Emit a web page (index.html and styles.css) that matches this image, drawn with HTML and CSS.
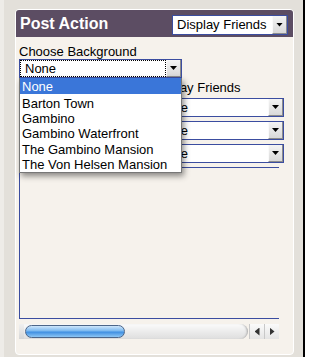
FILE: index.html
```html
<!DOCTYPE html>
<html>
<head>
<meta charset="utf-8">
<link rel="stylesheet" href="styles.css">
</head>
<body>
<div class="page">
  <div class="strip"></div>
  <div class="gutter">
    <div class="panel">
      <div class="header">
        <div class="title">Post Action</div>
        <div class="select hdr-select"><span class="txt">Display Friends</span><span class="btn"><i class="tri"></i></span></div>
      </div>
      <div class="content">
        <div class="label">Choose Background</div>
        <div class="select bg-select"><span class="txt focus">None</span><span class="btn"><i class="tri"></i></span></div>
        <div class="friends">
          <div class="label">Display Friends</div>
          <div class="select f-select"><span class="txt">None</span><span class="btn"><i class="tri"></i></span></div>
          <div class="select f-select"><span class="txt">None</span><span class="btn"><i class="tri"></i></span></div>
          <div class="select f-select"><span class="txt">None</span><span class="btn"><i class="tri"></i></span></div>
        </div>
        <div class="box"></div>
        <div class="hscroll">
          <div class="track"><div class="cap"></div><div class="thumb"></div></div>
          <div class="arrow"><i class="ltri"></i></div>
          <div class="arrow"><i class="rtri"></i></div>
        </div>
        <ul class="dropdown">
          <li class="item sel">None</li>
          <li class="item first">Barton Town</li>
          <li class="item">Gambino</li>
          <li class="item">Gambino Waterfront</li>
          <li class="item">The Gambino Mansion</li>
          <li class="item">The Von Helsen Mansion</li>
        </ul>
      </div>
    </div>
  </div>
  <div class="rule"></div>
  <div class="blank"></div>
</div>
</body>
</html>
```
FILE: styles.css
```css
* { box-sizing: border-box; }
html, body { margin: 0; padding: 0; }
body {
  font-family: "Liberation Sans", Arial, Helvetica, sans-serif;
  font-size: 13px;
  color: #000;
  background: #fff;
}
.page {
  display: flex;
  height: 357px;
  width: 321px;
  background: #e3e0da;
}
.strip { width: 4px; background: #eeece8; }
.gutter { padding: 9px 9px 0 11px; }
.panel {
  width: 279px;
  height: 346px;
  background: #f6f2ec;
  border: 1px solid #fff;
  border-radius: 4px;
  overflow: hidden;
}
.header {
  height: 27px;
  background: #5c4d63;
  display: flex;
  justify-content: space-between;
  align-items: flex-start;
  padding: 0 5px 0 4px;
}
.title {
  color: #fff;
  font-weight: bold;
  font-size: 16px;
  line-height: 20px;
  margin-top: 4px;
}
.select {
  display: flex;
  background: #fff;
  border: 1px solid #3b4da0;
}
.select .txt {
  flex: 1;
  white-space: nowrap;
  overflow: hidden;
}
.btn {
  width: 15px;
  display: flex;
  align-items: center;
  justify-content: center;
  background: linear-gradient(#f4f4f4, #d9d9d9);
  border-left: 1px solid #fafafa;
  border-right: 1px solid #8c8c8c;
  border-bottom: 1px solid #8c8c8c;
}
.tri {
  display: block;
  width: 7px;
  height: 4px;
  background: #000;
  clip-path: polygon(0 0, 100% 0, 50% 100%);
}
.hdr-select {
  width: 116px;
  height: 20px;
  margin-top: 5px;
}
.hdr-select .txt { padding-left: 4px; line-height: 18px; }
.content {
  position: relative;
  padding: 7px 3px 0;
}
.label {
  line-height: 15px;
  white-space: nowrap;
}
.bg-select {
  width: 163px;
  height: 19px;
}
.bg-select .txt.focus {
  border: 1px dotted #000;
  padding-left: 4px;
  line-height: 15px;
}
.friends {
  margin-left: 132px;
  margin-top: 2px;
  display: flex;
  flex-direction: column;
  gap: 4px;
}
.friends .label { margin-bottom: -1px; }
.f-select {
  width: 133px;
  height: 19px;
}
.f-select .txt { padding-left: 5px; line-height: 17px; }
.box {
  margin-top: 4px;
  width: 260px;
  height: 152px;
  border: 1px solid #3b4da0;
  border-right: none;
}
.hscroll {
  margin-top: 5px;
  width: 260px;
  height: 15px;
  display: flex;
}
.track {
  flex: 1;
  display: flex;
  align-items: center;
  background: linear-gradient(#fbfbfb, #e9e9e9 60%, #dedede);
  border-radius: 0 8px 8px 0;
  box-shadow: inset -2px 0 2px -1px #aaa;
  margin-right: 1px;
}
.cap {
  width: 5px;
  height: 15px;
  background: linear-gradient(#f0f0f0, #d6d6d6);
}
.thumb {
  margin-left: 1px;
  width: 100px;
  height: 13px;
  border-radius: 7px;
  border: 1px solid #4c6588;
  background: linear-gradient(#cfe6fb, #7ab8ef 45%, #3f8fe2 55%, #8cc6f4);
}
.arrow {
  width: 15px;
  height: 15px;
  display: flex;
  align-items: center;
  justify-content: center;
  background: linear-gradient(#fafafa, #e4e4e4);
  border-left: 1px solid #c8c8c8;
}
.ltri, .rtri {
  display: block;
  width: 5px;
  height: 8px;
  background: #333;
}
.ltri { clip-path: polygon(100% 0, 100% 100%, 0 50%); }
.rtri { clip-path: polygon(0 0, 0 100%, 100% 50%); }
.dropdown {
  position: absolute;
  top: 41px;
  left: 3px;
  width: 163px;
  height: 95px;
  margin: 0;
  padding: 0;
  list-style: none;
  background: #fff;
  border: 1px solid #777;
  border-top: none;
  box-shadow: 2px 3px 6px rgba(0, 0, 0, 0.45);
}
.item {
  padding-left: 2px;
  line-height: 15.2px;
  white-space: nowrap;
}
.item.sel {
  background: #3a76d9;
  color: #fff;
  height: 16px;
  line-height: 14px;
  padding-top: 2px;
}
.item.first { margin-top: 2px; }
.rule { width: 2px; background: #000; }
.blank { flex: 1; background: #fff; }
```
